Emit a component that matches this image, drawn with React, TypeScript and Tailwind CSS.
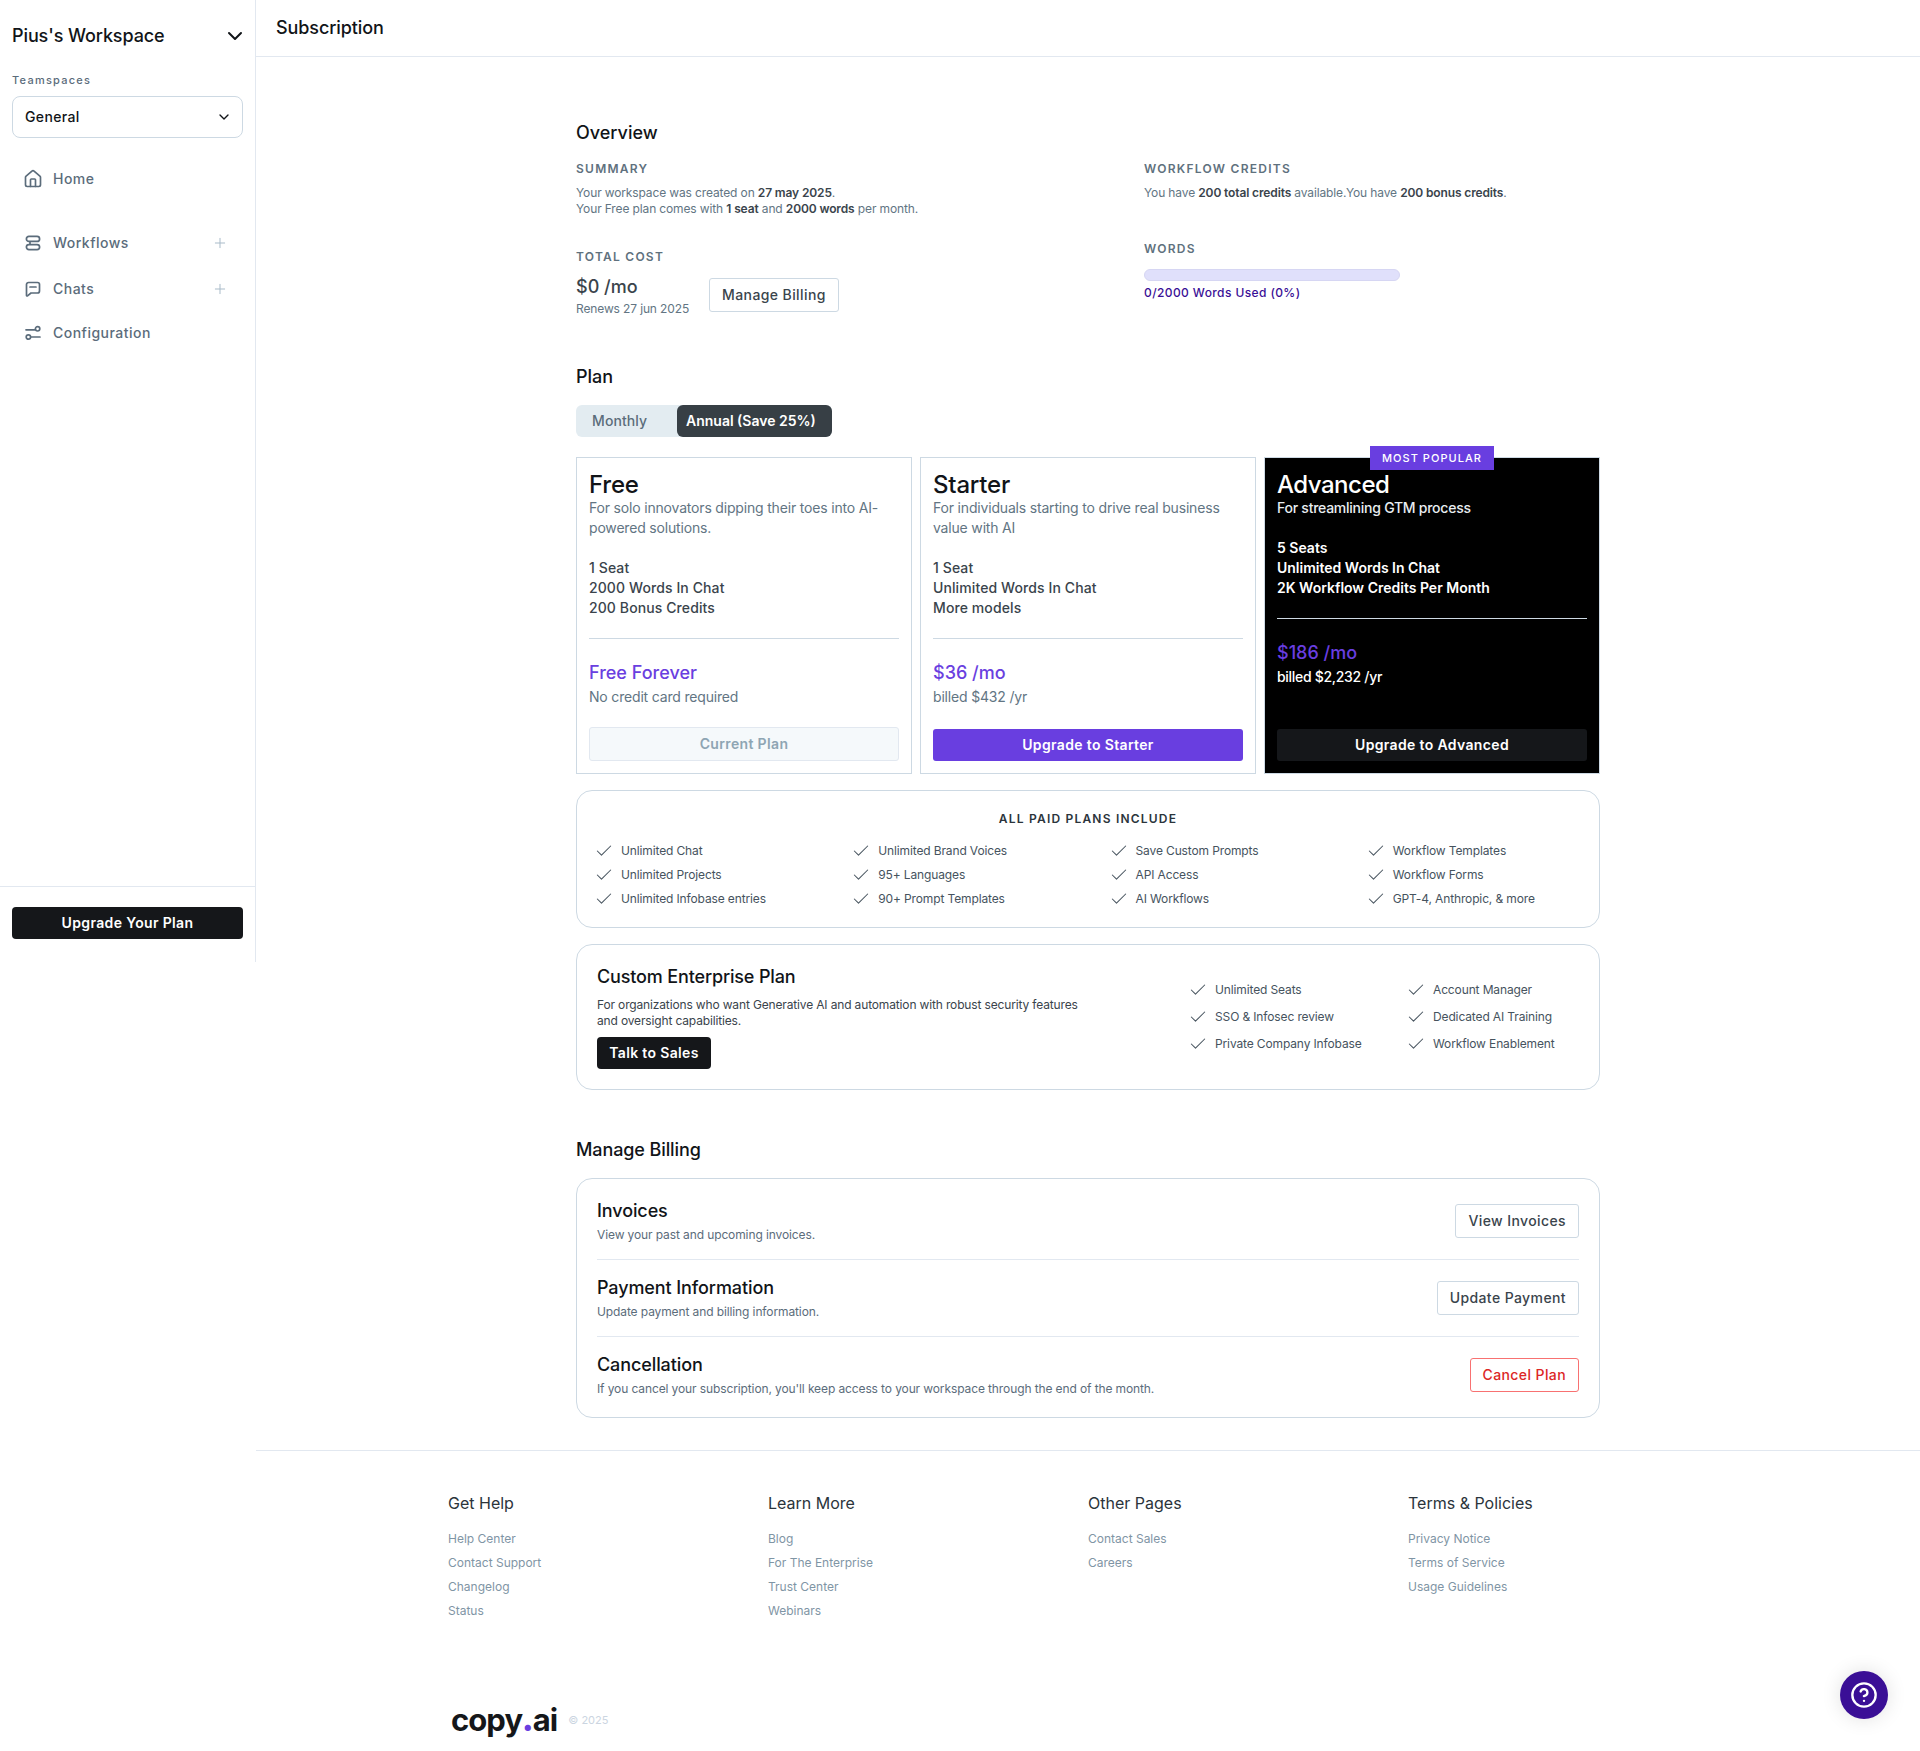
import { Check, ChevronDown, CircleHelp, House, Plus } from "lucide-react";

const plans = [
    {
        name: "Free",
        desc: "For solo innovators dipping their toes into AI-powered solutions.",
        features: ["1 Seat", "2000 Words In Chat", "200 Bonus Credits"],
        price: "Free Forever",
        note: "No credit card required",
    },
    {
        name: "Starter",
        desc: "For individuals starting to drive real business value with AI",
        features: ["1 Seat", "Unlimited Words In Chat", "More models"],
        price: "$36 /mo",
        note: "billed $432 /yr",
    },
];

const paidFeatures = [
    "Unlimited Chat", "Unlimited Brand Voices", "Save Custom Prompts", "Workflow Templates",
    "Unlimited Projects", "95+ Languages", "API Access", "Workflow Forms",
    "Unlimited Infobase entries", "90+ Prompt Templates", "AI Workflows", "GPT-4, Anthropic, & more",
];

const footerCols = [
    { title: "Get Help", links: ["Help Center", "Contact Support", "Changelog", "Status"] },
    { title: "Learn More", links: ["Blog", "For The Enterprise", "Trust Center", "Webinars"] },
    { title: "Other Pages", links: ["Contact Sales", "Careers"] },
    { title: "Terms & Policies", links: ["Privacy Notice", "Terms of Service", "Usage Guidelines"] },
];

function WorkflowIcon() {
    return (
        <svg width="16" height="16" viewBox="0 0 16 16" fill="none" stroke="currentColor" strokeWidth="1.7">
            <rect x="1.4" y="1.4" width="13.2" height="5" rx="2.5" />
            <rect x="1.4" y="9.6" width="13.2" height="5" rx="2.5" />
            <path d="M5 6.4v3.2" />
        </svg>
    );
}

function ChatIcon() {
    return (
        <svg width="16" height="16" viewBox="0 0 16 16" fill="none" stroke="currentColor" strokeWidth="1.7" strokeLinejoin="round" strokeLinecap="round">
            <path d="M3.5 1.5h9a2 2 0 0 1 2 2v6.5a2 2 0 0 1-2 2H6l-3.5 2.8a.6.6 0 0 1-1-.4V3.5a2 2 0 0 1 2-2z" />
            <path d="M5 6h6" />
        </svg>
    );
}

function ConfigIcon() {
    return (
        <svg width="16" height="16" viewBox="0 0 16 16" fill="none" stroke="currentColor" strokeWidth="1.7" strokeLinecap="round">
            <path d="M1 4.8h8.6" />
            <circle cx="12.6" cy="3.8" r="2.2" />
            <circle cx="3.4" cy="12" r="2.2" />
            <path d="M6.4 12H15" />
        </svg>
    );
}

function NavItem({ label, icon, plus, className }: { label: string; icon: React.ReactNode; plus?: boolean; className?: string }) {
    return (
        <div className={`flex items-center h-5 pl-[25px] pr-[27px] text-[#5b6c7b] ${className ?? ""}`}>
            <span className="w-7 shrink-0">{icon}</span>
            <span className="text-sm font-medium tracking-[0.48px] flex-1">{label}</span>
            {plus && <Plus size={16} strokeWidth={1.5} className="text-[#a9bbc9]" />}
        </div>
    );
}

function CheckItem({ label, className }: { label: string; className?: string }) {
    return (
        <div className={`flex items-center gap-[7px] text-xs tracking-[-0.13px] text-[#46535e] ${className ?? ""}`}>
            <Check size={20} strokeWidth={1.25} className="shrink-0 -ml-[3px] text-[#46535e]" />
            <span>{label}</span>
        </div>
    );
}

function Label({ children }: { children: React.ReactNode }) {
    return <div className="text-xs leading-4 font-semibold tracking-[1.25px] text-[#5f717e]">{children}</div>;
}

function BillingRow({ title, sub, action, danger, last }: { title: string; sub: string; action: string; danger?: boolean; last?: boolean }) {
    return (
        <div className={`flex items-center justify-between pt-[14px] pb-4 ${last ? "" : "border-b border-[#e2e8f0]"}`}>
            <div>
                <div className="text-lg leading-7 font-medium tracking-[-0.1px] text-[#111418]">{title}</div>
                <div className="text-xs leading-4 mt-0.5 tracking-[-0.11px] text-[#5b6c7b]">{sub}</div>
            </div>
            <button className={`mt-0.5 h-[34px] px-3 bg-white rounded-[3px] border text-sm font-medium tracking-[0.4px] ${danger ? "border-[#f87171] text-[#dc2626]" : "border-[#cdd9e3] text-[#3a444c]"}`}>
                {action}
            </button>
        </div>
    );
}

export default function App() {
    return (
        <div className="relative flex h-[1751px] bg-white overflow-hidden font-['Inter',sans-serif] text-[#111418]">
            <aside className="w-[256px] h-[962px] shrink-0 border-r border-[#e2e8f0] flex flex-col">
                <div className="flex items-center justify-between pl-3 pr-2 h-7 mt-[22px]">
                    <span className="text-lg font-medium tracking-[-0.1px]">Pius's Workspace</span>
                    <ChevronDown size={24} strokeWidth={2} className="text-[#111418]" />
                </div>
                <div className="px-3 mt-[22px] text-[11px] leading-4 font-medium tracking-[1.25px] text-[#5b6c7b]">Teamspaces</div>
                <div className="mx-3 mt-2 h-[42px] flex items-center justify-between pl-3 pr-[10px] rounded-lg border border-[#cdd9e3]">
                    <span className="text-sm font-medium tracking-[0.37px]">General</span>
                    <ChevronDown size={16} strokeWidth={2} />
                </div>
                <NavItem className="mt-[31px]" label="Home" icon={<House size={20} strokeWidth={2} className="-ml-[2px]" />} />
                <NavItem className="mt-[44px]" label="Workflows" plus icon={<WorkflowIcon />} />
                <NavItem className="mt-[26px]" label="Chats" plus icon={<ChatIcon />} />
                <NavItem className="mt-[24px]" label="Configuration" icon={<ConfigIcon />} />
                <div className="mt-auto h-[76px] border-t border-[#e2e8f0] pt-5 px-3">
                    <button className="w-full h-8 rounded bg-[#15171a] text-white text-sm font-semibold tracking-[0.35px]">Upgrade Your Plan</button>
                </div>
            </aside>

            <main className="flex-1 min-w-0">
                <header className="h-[57px] border-b border-[#e2e8f0] pl-5 pt-[14px]">
                    <div className="text-lg leading-7 font-medium tracking-[-0.1px]">Subscription</div>
                </header>

                <div className="w-[1024px] mx-auto pt-[62px]">
                    <h2 className="text-lg leading-7 font-medium">Overview</h2>
                    <div className="grid grid-cols-[568px_456px] mt-[14px]">
                        <div>
                            <Label>SUMMARY</Label>
                            <p className="mt-2 text-xs leading-4 tracking-[-0.13px] text-[#627583]">
                                Your workspace was created on <b className="font-semibold text-[#3a444c]">27 may 2025</b>.<br />
                                Your Free plan comes with <b className="font-semibold text-[#3a444c]">1 seat</b> and <b className="font-semibold text-[#3a444c]">2000 words</b> per month.
                            </p>
                            <div className="mt-8">
                                <Label>TOTAL COST</Label>
                            </div>
                            <div className="flex items-center gap-5 mt-2">
                                <div>
                                    <div className="text-lg leading-7 font-medium text-[#3a444c]">$0 /mo</div>
                                    <div className="text-xs leading-4 tracking-[-0.13px] text-[#627583]">Renews 27 jun 2025</div>
                                </div>
                                <button className="h-[34px] px-3 bg-white rounded-[3px] border border-[#cdd9e3] text-sm font-medium tracking-[0.4px] text-[#3a444c]">Manage Billing</button>
                            </div>
                        </div>
                        <div>
                            <Label>WORKFLOW CREDITS</Label>
                            <p className="mt-2 text-xs leading-4 tracking-[-0.13px] text-[#627583]">
                                You have <b className="font-semibold text-[#3a444c]">200 total credits</b> available.You have <b className="font-semibold text-[#3a444c]">200 bonus credits</b>.
                            </p>
                            <div className="mt-10">
                                <Label>WORDS</Label>
                            </div>
                            <div className="mt-3 w-[256px] h-3 rounded-full bg-[#e0e0fb] border border-[#d6d6f3]" />
                            <div className="mt-1 text-xs leading-4 font-medium tracking-[0.4px] text-[#3a0f96]">0/2000 Words Used (0%)</div>
                        </div>
                    </div>

                    <h2 className="text-lg leading-7 font-medium mt-[46px]">Plan</h2>
                    <div className="flex items-center h-8 w-[256px] mt-[14px] rounded-md bg-[#e3ecf1]">
                        <span className="w-[101px] pl-4 text-sm font-medium tracking-[0.1px] text-[#5b6c7b]">Monthly</span>
                        <span className="w-[155px] h-8 flex items-center pl-[9px] rounded-md bg-[#373f45] text-white text-sm font-semibold">Annual (Save 25%)</span>
                    </div>

                    <div className="grid grid-cols-3 gap-2 mt-5">
                        {plans.map((p) => (
                            <div key={p.name} className="h-[317px] border border-[#cdd9e3] p-3 flex flex-col">
                                <div className="pt-px text-2xl leading-7 font-medium tracking-[-0.2px]">{p.name}</div>
                                <p className="-mt-px text-sm leading-5 tracking-[-0.18px] text-[#627583]">{p.desc}</p>
                                <ul className="mt-5 text-sm leading-5 font-medium tracking-[0.1px] text-[#3a444c]">
                                    {p.features.map((f) => <li key={f}>{f}</li>)}
                                </ul>
                                <div className="mt-5 border-t border-[#cdd9e3]" />
                                <div className="mt-5 text-lg leading-7 font-medium text-[#6a3fe0]">{p.price}</div>
                                <div className="text-sm leading-5 tracking-[-0.18px] text-[#627583]">{p.note}</div>
                                {p.name === "Free" ? (
                                    <button className="mt-auto h-[34px] rounded-[3px] bg-[#f5f9fb] border border-[#e2e8f0] text-sm font-semibold tracking-[0.35px] text-[#8ea5b3]">Current Plan</button>
                                ) : (
                                    <button className="mt-auto h-8 rounded-[3px] bg-[#693ee0] text-sm font-semibold tracking-[0.35px] text-white">Upgrade to Starter</button>
                                )}
                            </div>
                        ))}
                        <div className="relative h-[317px] border border-[#cdd9e3] bg-black text-white p-3 flex flex-col">
                            <div className="absolute left-1/2 -translate-x-1/2 -top-[12px] w-[124px] h-6 flex items-center justify-center bg-[#693ee0] text-[11px] font-medium tracking-[1.05px]">MOST POPULAR</div>
                            <div className="pt-px text-2xl leading-7 font-medium tracking-[-0.5px]">Advanced</div>
                            <p className="-mt-px text-sm leading-5 font-medium tracking-[-0.25px] text-[#e8edf1]">For streamlining GTM process</p>
                            <ul className="mt-5 text-sm leading-5 font-semibold">
                                <li>5 Seats</li>
                                <li>Unlimited Words In Chat</li>
                                <li>2K Workflow Credits Per Month</li>
                            </ul>
                            <div className="mt-5 border-t border-[#cdd9e3]" />
                            <div className="mt-5 text-lg leading-7 font-medium text-[#693ee0]">$186 /mo</div>
                            <div className="text-sm leading-5 font-medium tracking-[-0.3px]">billed $2,232 /yr</div>
                            <button className="mt-auto h-8 rounded-[3px] bg-[#15171a] text-sm font-semibold tracking-[0.35px] text-white">Upgrade to Advanced</button>
                        </div>
                    </div>

                    <div className="h-[138px] mt-4 rounded-2xl border border-[#cdd9e3] px-5 pt-5">
                        <div className="text-xs leading-4 font-semibold tracking-[1.2px] text-center text-[#2b343b]">ALL PAID PLANS INCLUDE</div>
                        <div className="grid grid-cols-4 gap-x-[47px] mt-[12px]">
                            {paidFeatures.map((f) => <CheckItem key={f} label={f} className="h-6" />)}
                        </div>
                    </div>

                    <div className="h-[146px] mt-4 rounded-2xl border border-[#cdd9e3] pl-5 pr-5 pt-[18px] flex">
                        <div className="w-[594px]">
                            <div className="text-lg leading-7 font-medium tracking-[-0.15px]">Custom Enterprise Plan</div>
                            <p className="mt-[6px] w-[500px] text-xs leading-4 tracking-[-0.15px] text-[#3a444c]">For organizations who want Generative AI and automation with robust security features and oversight capabilities.</p>
                            <button className="mt-2 w-[114px] h-8 rounded bg-[#15171a] text-white text-sm font-semibold tracking-[0.35px]">Talk to Sales</button>
                        </div>
                        <div className="grid grid-cols-[218px_1fr] auto-rows-[27px] mt-[13px]">
                            <CheckItem label="Unlimited Seats" />
                            <CheckItem label="Account Manager" />
                            <CheckItem label="SSO & Infosec review" />
                            <CheckItem label="Dedicated AI Training" />
                            <CheckItem label="Private Company Infobase" />
                            <CheckItem label="Workflow Enablement" />
                        </div>
                    </div>

                    <h2 className="text-lg leading-7 font-medium tracking-[-0.1px] mt-[46px]">Manage Billing</h2>
                    <div className="h-[240px] mt-[14px] rounded-2xl border border-[#cdd9e3] px-5 pt-1">
                        <BillingRow title="Invoices" sub="View your past and upcoming invoices." action="View Invoices" />
                        <BillingRow title="Payment Information" sub="Update payment and billing information." action="Update Payment" />
                        <BillingRow title="Cancellation" sub="If you cancel your subscription, you'll keep access to your workspace through the end of the month." action="Cancel Plan" danger last />
                    </div>
                </div>

                <footer className="mt-8 border-t border-[#e2e8f0]">
                    <div className="w-[1280px] mx-auto pt-10">
                        <div className="grid grid-cols-4 h-[131px]">
                            {footerCols.map((c) => (
                                <div key={c.title}>
                                    <div className="text-base leading-6 text-[#2b343b]">{c.title}</div>
                                    <ul className="mt-3">
                                        {c.links.map((l) => <li key={l} className="text-xs leading-6 text-[#7f95a5]">{l}</li>)}
                                    </ul>
                                </div>
                            ))}
                        </div>
                        <div className="flex items-center mt-[78px] pl-[3px] h-10">
                            <span className="text-[31px] leading-10 font-bold tracking-[-0.95px] text-[#15171a]">copy<span className="font-black text-[#6a3fe0]">.</span>ai</span>
                            <span className="ml-[11px] text-[11px] text-[#cbd5e1]">© 2025</span>
                        </div>
                    </div>
                </footer>
            </main>

            <button className="absolute right-8 bottom-8 w-12 h-12 rounded-full bg-[#3a0f96] text-white flex items-center justify-center shadow-[0_0_20px_rgba(0,0,0,0.12)]">
                <CircleHelp size={28} strokeWidth={2} />
            </button>
        </div>
    );
}
